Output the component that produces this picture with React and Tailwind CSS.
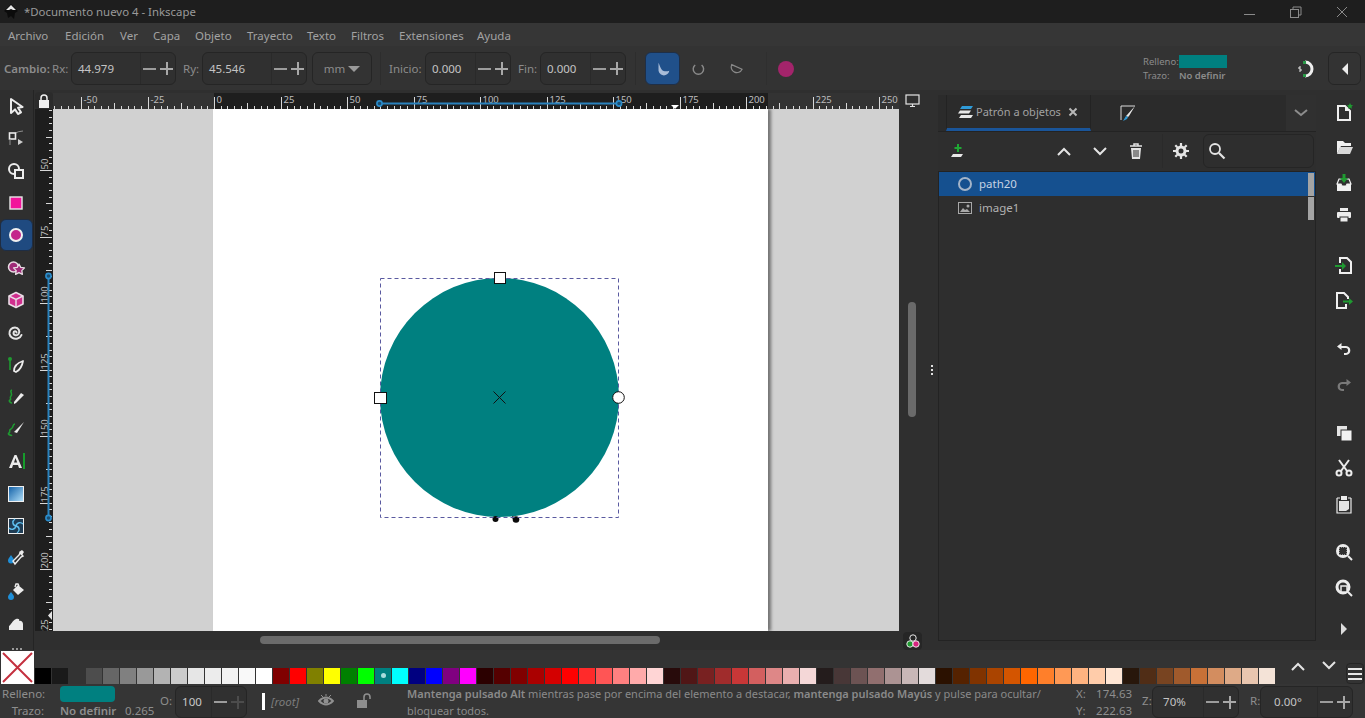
import React from "react";

const font = { fontFamily: '"Noto Sans", "Open Sans", sans-serif' };

const swatches = [
  "#000000", "#1a1a1a", "#333333", "#4d4d4d", "#666666", "#808080", "#999999", "#b3b3b3", "#cccccc", "#e6e6e6", "#ececec", "#f2f2f2", "#f9f9f9", "#ffffff",
  "#800000", "#ff0000", "#808000", "#ffff00", "#008000", "#00ff00", "#008080", "#00ffff", "#000080", "#0000ff", "#800080", "#ff00ff",
  "#2b0000", "#550000", "#800000", "#aa0000", "#d40000", "#ff0000", "#ff2a2a", "#ff5555", "#ff8080", "#ffaaaa", "#ffd5d5",
  "#280b0b", "#501616", "#782121", "#a02c2c", "#c83737", "#d35f5f", "#de8787", "#e9afaf", "#f4d7d7",
  "#241c1c", "#483737", "#6c5353", "#916f6f", "#ac9393", "#c8b7b7", "#e3dbdb",
  "#2b1100", "#552200", "#803300", "#aa4400", "#d45500", "#ff6600", "#ff7f2a", "#ff9955", "#ffb380", "#ffccaa", "#ffe6d5",
  "#28170b", "#502d16", "#784421", "#a05a2c", "#c87137", "#d38d5f", "#deaa87", "#e9c6af", "#f4e3d7",
];

const menus = [
  ["Archivo", "w-[57px]"],
  ["Edición", "w-[55px]"],
  ["Ver", "w-[33px]"],
  ["Capa", "w-[42px]"],
  ["Objeto", "w-[52px]"],
  ["Trayecto", "w-[60px]"],
  ["Texto", "w-[44px]"],
  ["Filtros", "w-[48px]"],
  ["Extensiones", "w-[78px]"],
  ["Ayuda", "w-[50px]"],
];

function Ico({ size = 20, children, className = "" }) {
  return (
    <svg width={size} height={size} viewBox="0 0 20 20" fill="none" className={className}>
      {children}
    </svg>
  );
}

function SpinBox({ value, width, text = "text-[#c4c4c4]", dim = false, pad = "pl-[6px]" }) {
  return (
    <div className={`flex items-center h-full rounded-md border border-[#252525] bg-[#303030] shrink-0 ${width}`}>
      <span className={`flex-1 text-[11.5px] ${pad} ${text}`}>{value}</span>
      <div className="flex items-center h-full border-l border-[#2a2a2a] w-[35px] shrink-0">
        <span className="w-[17px] flex justify-center">
          <span className="block w-[13px] h-[2px] bg-[#9c9c9c]" />
        </span>
        <span className="w-[17px] flex justify-center relative h-[13px] items-center">
          <span className={`block w-[13px] h-[2px] ${dim ? "bg-[#4c4c4c]" : "bg-[#a8a8a8]"}`} />
          <span className={`absolute left-[7.5px] top-0 block w-[2px] h-[13px] ${dim ? "bg-[#4c4c4c]" : "bg-[#a8a8a8]"}`} />
        </span>
      </div>
    </div>
  );
}

function HRuler() {
  const ticks = [];
  const labels = [];
  const zero = 161;
  for (let i = -24; i <= 104; i++) {
    const x = Math.round(zero + i * 6.65) + 0.5;
    const major = i % 10 === 0;
    const mid = i % 5 === 0;
    const h = major ? 12 : mid ? 6 : 3;
    ticks.push(<line key={i} x1={x} x2={x} y1={16 - h} y2={16} stroke="#d8d8d8" strokeWidth="1" />);
    if (major) {
      labels.push(
        <text key={i} x={x + 2} y={10} fontSize="9.5" fill="#bdbdbd" style={font}>
          {i * 2.5}
        </text>
      );
    }
  }
  return (
    <svg width="846" height="16" className="block">
      <rect width="846" height="16" fill="#333333" />
      <rect x="161" width="554" height="16" fill="#1e1e1e" />
      {ticks}
      {labels}
      <path d="M618 12h8l-4 4z" fill="#ffffff" />
      <line x1="326" x2="566" y1="10.5" y2="10.5" stroke="#2a82bd" strokeWidth="2" />
      <circle cx="326.5" cy="10.5" r="2.6" fill="#1b4d70" stroke="#2a8ccb" strokeWidth="1.6" />
      <circle cx="566" cy="10.5" r="2.6" fill="#1b4d70" stroke="#2a8ccb" strokeWidth="1.6" />
    </svg>
  );
}

function VRuler() {
  const ticks = [];
  const labels = [];
  const zero = 37 - 109;
  for (let i = 0; i <= 92; i++) {
    const y = Math.round(zero + i * 6.65) + 0.5;
    if (y < 0) continue;
    const major = i % 10 === 0;
    const mid = i % 5 === 0;
    const w = major ? 12 : mid ? 6 : 3;
    ticks.push(<line key={i} x1={17 - w} x2={17} y1={y} y2={y} stroke="#d8d8d8" strokeWidth="1" />);
    if (major && y > 20) {
      labels.push(
        <text key={i} x={0} y={0} transform={`translate(13 ${y - 1}) rotate(-90)`} fontSize="9.5" fill="#bdbdbd" style={font}>
          {i * 2.5}
        </text>
      );
    }
  }
  return (
    <svg width="18" height="522" className="block">
      <rect width="18" height="522" fill="#1e1e1e" />
      {ticks}
      {labels}
      <path d="M17 502v9l-4-4.5z" fill="#e4e4e4" />
      <line x1="13.5" x2="13.5" y1="167" y2="409" stroke="#2a82bd" strokeWidth="2" />
      <circle cx="13.5" cy="167" r="2.6" fill="#1b4d70" stroke="#2a8ccb" strokeWidth="1.6" />
      <circle cx="13.5" cy="409" r="2.6" fill="#1b4d70" stroke="#2a8ccb" strokeWidth="1.6" />
    </svg>
  );
}

const leftTools = [
  <Ico key="sel"><path d="M5 3v14l4-3.6L12 18l3-1.6-3-4.6 4.6-.8z" stroke="#ececec" strokeWidth="2" strokeLinejoin="round" fill="#2f2f2f" /></Ico>,
  <Ico key="node"><path d="M8 6q4-3 9-3" stroke="#8e8e8e" strokeWidth="1" /><rect x="3.500" y="5" width="6" height="6" fill="#2f2f2f" stroke="#ececec" strokeWidth="1.600" /><path d="M4 11v6" stroke="#8e8e8e" /><path d="M12 11l5 3-5 3z" fill="#cfcfcf" /></Ico>,
  <Ico key="tweak"><circle cx="8" cy="8" r="5" stroke="#ececec" strokeWidth="2" /><rect x="9" y="9" width="8" height="8" fill="#2f2f2f" stroke="#ececec" strokeWidth="2" /></Ico>,
  <Ico key="rect"><rect x="4" y="4" width="12" height="12" fill="#f2149b" stroke="#e8e8e8" strokeWidth="1.400" /></Ico>,
  <Ico key="ell"><circle cx="10" cy="10" r="6" fill="#c4268c" stroke="#f0f0f0" strokeWidth="2" /></Ico>,
  <Ico key="star">
    <circle cx="7.500" cy="9" r="5" fill="#a02a78" stroke="#e8dce4" strokeWidth="1.500" />
    <path d="M13 6l1.700 3.400 3.800.5-2.700 2.700.6 3.800-3.400-1.800-3.400 1.800.6-3.800-2.700-2.700 3.800-.5z" fill="#a02a78" stroke="#e8dce4" strokeWidth="1.300" strokeLinejoin="round" />
  </Ico>,
  <Ico key="box"><path d="M10 2.500l7 3.500v8l-7 3.500L3 14V6z" fill="#d02f8e" stroke="#eadde6" strokeWidth="1.600" strokeLinejoin="round" /><path d="M3 6l7 3.500L17 6M10 9.500v8" stroke="#eadde6" strokeWidth="1.400" /></Ico>,
  <Ico key="spiral"><path d="M10.500 10.500c0-1.800-3-1.500-3 .5 0 2.500 3.500 3 5 1 2-2.800 0-6.500-3.500-6.500C5.500 5.500 3 8.500 3.500 12c.6 3.500 4.500 5.500 8 4.500 2-.6 3.500-2 4-3.500" stroke="#e4e4e4" strokeWidth="2" strokeLinecap="round" /></Ico>,
  <Ico key="pen"><circle cx="4" cy="4" r="2" fill="#1f9a31" /><path d="M4 5v10" stroke="#1f9a31" strokeWidth="1.600" /><path d="M8 16c0-5 3-8 9-10-1 6-3 9-7 11z" fill="#2f2f2f" stroke="#ececec" strokeWidth="1.800" strokeLinejoin="round" /></Ico>,
  <Ico key="pencil"><path d="M6 3C3 4 7 7 5 9s1 3-1 4 1 3 2 3" stroke="#1f9a31" strokeWidth="1.600" /><path d="M8 15l7-9 3 2-8 8-2 1z" fill="#ececec" /></Ico>,
  <Ico key="cal"><path d="M9 5C6 5 8 9 5 10s0 3-2 4 2 3 3 2" stroke="#1f9a31" strokeWidth="1.600" /><path d="M8 13L18 3l-7 11z" fill="#ececec" /></Ico>,
  <Ico key="text"><path d="M3 17L8.500 4h2L16 17h-3l-1-3H7l-1 3zM8 11.500h3.200L9.500 7z" fill="#ececec" fillRule="evenodd" /><rect x="17" y="2" width="2" height="16" fill="#169c2b" /></Ico>,
  <Ico key="grad"><defs><linearGradient id="gr1" x1="0" y1="0" x2="1" y2="1"><stop offset="0" stopColor="#0f5ea6" /><stop offset="1" stopColor="#b4e2fa" /></linearGradient></defs><rect x="2.500" y="2.500" width="15" height="15" fill="url(#gr1)" stroke="#f0f0f0" strokeWidth="1" /></Ico>,
  <Ico key="mesh"><rect x="2.500" y="2.500" width="15" height="15" fill="#1f3d55" stroke="#f0f0f0" strokeWidth="1" /><path d="M10 10C6 9 6 5 9 3M10 10c1-4 5-4 7-2M10 10c4 1 4 5 1 7M10 10c-1 4-5 4-7 2" stroke="#5fc0f0" strokeWidth="1.400" /></Ico>,
  <Ico key="drop"><path d="M5 7c-2 3-3 4-3 5.500a3 3 0 006 0C8 11 7 10 5 7z" fill="#1f8fd8" /><path d="M9 16l6-7 2-1-3-3-1 2-6 6z" fill="#2f2f2f" stroke="#ececec" strokeWidth="1.400" /><path d="M13 4l3-2 2 2-2 3z" fill="#ececec" /></Ico>,
  <Ico key="fill"><path d="M5 11c-2 3-3 3.500-3 5a3 3 0 006 0c0-1.500-1-2-3-5z" fill="#1f8fd8" /><path d="M7 9l5-5 6 5-6 5z" fill="#ececec" /><path d="M9 6l1-3h2l1 2" stroke="#ececec" strokeWidth="1.400" /></Ico>,
  <Ico key="eraser"><path d="M3 17v-4c2-1 3-5 7-7 2-.800 4 0 3 2 2-1 4 1 4 3v6z" fill="#ececec" /></Ico>,
];

const rightTools = [
  [<Ico key="a"><path d="M4 3h7l5 5v9H4z" fill="#2f2f2f" stroke="#f0f0f0" strokeWidth="2" /><path d="M11 3v5h5" fill="#f0f0f0" /><path d="M16 0l1 2 2 .2-1.500 1.500.5 2-2-1-2 1 .5-2L13 2.200 15 2z" fill="#1f9a31" /></Ico>, "mb-[2px]"],
  [<Ico key="b"><path d="M3 4h6l2 2h6v3H7l-4 8z" fill="#f0f0f0" /><path d="M3 17l3-7h13l-3 7z" fill="#d8d8d8" /></Ico>, "mb-[4px]"],
  [<Ico key="c"><path d="M3 11h4l1 2h4l1-2h4v7H3z" fill="#f0f0f0" /><path d="M5 6h10l2 5h-4l-1 2H8l-1-2H3z" fill="#2f2f2f" stroke="#f0f0f0" strokeWidth="1.200" /><path d="M8.500 5V1h3v4H14l-4 5-4-5z" fill="#1f9a31" /></Ico>, "mb-0"],
  [<Ico key="d"><rect x="6" y="3" width="8" height="3" fill="#ececec" /><rect x="3" y="7" width="14" height="6" rx="1" fill="#ececec" /><rect x="6" y="12" width="8" height="5" fill="#ececec" stroke="#2f2f2f" /></Ico>, "mb-[18px]"],
  [<Ico key="e"><path d="M6 8V3h7l4 4v11H6v-4" stroke="#f0f0f0" strokeWidth="2" /><path d="M1 10h7V7l4 4-4 4v-3H1z" fill="#1f9a31" /></Ico>, "mb-[3px]"],
  [<Ico key="f"><path d="M12 14v4H3V3h7l4 4v2" stroke="#f0f0f0" strokeWidth="2" /><path d="M9 10.500h6V8l4 3.500-4 3.500v-2.500H9z" fill="#1f9a31" /></Ico>, "mb-[17px]"],
  [<Ico key="g"><path d="M7.500 4L3 7.500 7.500 11V9H12c2.800 0 2.800 5 0 5h-2v2h2c5.800 0 5.800-9 0-9H7.500z" fill="#ececec" /></Ico>, "mb-[4px]"],
  [<Ico key="h"><path d="M12.500 4L17 7.500 12.500 11V9H8c-2.800 0-2.800 5 0 5h2v2H8C2.200 16 2.200 7 8 7h4.500z" fill="#7a7a7a" /></Ico>, "mb-[16px]"],
  [<Ico key="i"><rect x="3" y="3" width="10" height="10" fill="#e4e4e4" /><rect x="7" y="7" width="11" height="11" fill="#f2f2f2" stroke="#2f2f2f" /></Ico>, "mb-[3px]"],
  [<Ico key="j"><path d="M5 2l8 11M15 2L7 13" stroke="#ececec" strokeWidth="2" /><circle cx="5" cy="15" r="2.500" stroke="#ececec" strokeWidth="2" /><circle cx="15" cy="15" r="2.500" stroke="#ececec" strokeWidth="2" /></Ico>, "mb-[4px]"],
  [<Ico key="k"><path d="M3 4h3M14 4h3M3 4v15h14V4" stroke="#ececec" strokeWidth="1.200" /><rect x="7" y="2" width="6" height="4" fill="#ececec" /><path d="M5 7h10v8l-3 2H5z" fill="#e4e4e4" /></Ico>, "mb-[16px]"],
  [<Ico key="l"><circle cx="9" cy="9" r="7" fill="#ececec" /><rect x="5" y="5" width="8" height="8" fill="#2f2f2f" /><rect x="5" y="5" width="8" height="8" fill="none" stroke="#ececec" strokeDasharray="1 1" /><path d="M14 14l4 4" stroke="#ececec" strokeWidth="2" /></Ico>, "mb-[4px]"],
  [<Ico key="m"><circle cx="9" cy="9" r="6" stroke="#ececec" strokeWidth="3" /><rect x="7" y="8" width="6" height="6" fill="#2f2f2f" stroke="#ececec" strokeWidth="1.500" /><path d="M14 14l4 4" stroke="#ececec" strokeWidth="2" /></Ico>, "mb-[19px]"],
];

export default function App() {
  return (
    <div className="w-[1365px] h-[718px] overflow-hidden flex flex-col bg-[#2f2f2f] text-[#b0b0b0] select-none" style={font}>
      {/* title bar */}
      <div className="h-[23px] shrink-0 flex items-center bg-[#1e1e1e]">
        <svg width="18" height="18" viewBox="0 0 18 18" className="ml-[2px]">
          <path d="M9 1l7 7-3 2-1 6-3-3-3 2-1-5-3-2z" fill="#0b0b0b" />
          <path d="M9 2L4 7h3l2-1 2 1h3z" fill="#e8e8e8" />
        </svg>
        <span className="ml-[4px] text-[11.4px] text-[#9a9a9a]">*Documento nuevo 4 - Inkscape</span>
        <div className="ml-auto flex items-center">
          <svg width="46" height="16" viewBox="0 0 46 16"><line x1="17" x2="28" y1="10.500" y2="10.500" stroke="#8a8a8a" /></svg>
          <svg width="46" height="16" viewBox="0 0 46 16"><rect x="17.500" y="5.500" width="8" height="8" fill="none" stroke="#8a8a8a" /><path d="M20 5V3h8v8h-2" fill="none" stroke="#8a8a8a" /></svg>
          <svg width="46" height="16" viewBox="0 0 46 16"><path d="M18 3l10 10M28 3L18 13" stroke="#8a8a8a" /></svg>
        </div>
      </div>

      {/* menu */}
      <div className="h-[24px] shrink-0 flex items-center pl-[8px] pt-[2px] bg-[#363636] border-b border-[#333333] text-[11.5px] text-[#a2a2a2]">
        {menus.map(([m, w]) => (
          <span key={m} className={w}>{m}</span>
        ))}
      </div>

      {/* tool controls */}
      <div className="h-[43px] shrink-0 flex items-center bg-[#333333] text-[11.5px] text-[#8c8c8c] py-[5px]">
        <span className="ml-[4px] w-[48px] font-semibold whitespace-nowrap">Cambio:</span>
        <span className="w-[19px]">Rx:</span>
        <SpinBox value="44.979" width="w-[105px]" />
        <span className="ml-[7px] w-[19px]">Ry:</span>
        <SpinBox value="45.546" width="w-[105px]" />
        <div className="ml-[5px] w-[60px] h-full rounded-md border border-[#252525] flex items-center justify-center gap-[3px]">
          <span>mm</span>
          <span className="w-0 h-0 border-x-[6px] border-x-transparent border-t-[6px] border-t-[#9a9a9a]" />
        </div>
        <div className="ml-[8px] w-px h-full bg-[#2d2d2d]" />
        <span className="ml-[8px] w-[36px]">Inicio:</span>
        <SpinBox value="0.000" width="w-[86px]" />
        <span className="ml-[7px] w-[22px]">Fin:</span>
        <SpinBox value="0.000" width="w-[86px]" />
        <div className="ml-[9px] w-px h-full bg-[#2d2d2d]" />
        <div className="ml-[9px] w-[35px] h-full rounded-md bg-[#20508a] border border-[#1f2f47] flex items-center justify-center">
          <Ico size="18"><path d="M5 3v7a6 6 0 0012 2c-3 1-6.500 1-8.500-1.500C7 8.500 6.500 6 5 3z" fill="#a8bcd8" /></Ico>
        </div>
        <span className="ml-[12px] w-[16px] flex justify-center">
          <Ico size="16"><path d="M4 5a6.500 6.500 0 108 0" stroke="#8a8a8a" strokeWidth="1.800" /></Ico>
        </span>
        <span className="ml-[21px] w-[16px] flex justify-center">
          <Ico size="16"><path d="M5 3l11 9a6.500 6.500 0 11-11-9z" transform="rotate(-15 10 10)" stroke="#8a8a8a" strokeWidth="1.500" /></Ico>
        </span>
        <div className="ml-[21px] w-px h-full bg-[#2f2f2f]" />
        <span className="ml-[11px] w-[16px] h-[16px] rounded-full bg-[#a3246b]" />
        <div className="ml-auto w-[85px] flex flex-col text-[9.5px] leading-[14px] text-[#8c8c8c]">
          <div className="flex items-center">
            <span className="w-[36px] whitespace-nowrap">Relleno:</span>
            <span className="w-[48px] h-[13px] bg-[#008080]" />
          </div>
          <div className="flex items-center">
            <span className="w-[36px]">Trazo:</span>
            <span className="font-semibold">No definir</span>
          </div>
        </div>
        <span className="ml-[67px] w-[20px]">
          <Ico size="20"><path d="M10 3a7 7 0 010 14" stroke="#efefef" strokeWidth="3" /><rect x="8" y="2" width="3" height="3" fill="#2a9a48" /><rect x="8" y="15" width="3" height="3" fill="#2a9a48" /><path d="M6 8H4v2h2v2H4" stroke="#e8e8e8" strokeWidth="1" /></Ico>
        </span>
        <div className="ml-[13px] mr-[4px] w-[33px] h-full rounded-md border border-[#252525] flex items-center justify-center">
          <span className="w-0 h-0 border-y-[6px] border-y-transparent border-r-[6px] border-r-[#ececec]" />
        </div>
      </div>

      {/* main area */}
      <div className="h-[560px] shrink-0 flex bg-[#2f2f2f]">
        {/* left toolbox */}
        <div className="w-[34px] shrink-0 border-r border-[#242424] overflow-hidden">
          {leftTools.map((t, i) => (
            <div
              key={i}
              className={`h-[32.3px] flex items-center justify-center pr-px ${i === 4 ? "bg-[#1f4a80] rounded-md border border-[#1e2d44]" : ""}`}
            >
              {t}
            </div>
          ))}
          <div className="flex justify-center gap-[2px] pt-[9px]">
            <span className="w-[2px] h-[2px] bg-[#9a9a9a]" />
            <span className="w-[2px] h-[2px] bg-[#9a9a9a]" />
            <span className="w-[2px] h-[2px] bg-[#9a9a9a]" />
          </div>
        </div>

        {/* rulers + canvas */}
        <div className="w-[891px] shrink-0 flex flex-col pl-[1px]">
          <div className="h-[19px] shrink-0 flex items-end">
            <div className="w-[18px] h-[17px] bg-[#2b2b2b] rounded-sm flex items-center justify-center">
              <svg width="14" height="14" viewBox="0 0 14 14">
                <path d="M4 6V4a3 3 0 016 0v2" fill="none" stroke="#efefef" strokeWidth="1.500" />
                <rect x="2" y="6" width="10" height="8" fill="#efefef" />
              </svg>
            </div>
            <HRuler />
            <div className="ml-[6px] w-[15px] h-[16px] flex items-center justify-center">
              <svg width="15" height="14" viewBox="0 0 15 14">
                <rect x="1" y="1" width="13" height="9" fill="none" stroke="#e4e4e4" strokeWidth="1.200" />
                <path d="M5 12.500h5M7.500 10v2" stroke="#e4e4e4" strokeWidth="1.200" />
              </svg>
            </div>
          </div>
          <div className="h-[522px] shrink-0 flex">
            <VRuler />
            <div className="relative w-[846px] h-full overflow-hidden bg-[#d1d1d1]">
              {/* page */}
              <div className="absolute left-[160px] top-0 w-[555px] h-full bg-white shadow-[3px_0_3px_rgba(0,0,0,0.45)]" />
              <svg className="absolute left-0 top-0" width="846" height="522">
                <circle cx="446.500" cy="288.500" r="119.500" fill="#008080" />
                <circle cx="442.500" cy="410" r="3" fill="#0a0a0a" />
                <circle cx="463" cy="410.500" r="3.300" fill="#0a0a0a" />
                <path d="M459 408l4 2" stroke="#0a0a0a" strokeWidth="2" />
                <rect x="327.500" y="169.500" width="238" height="239" fill="none" stroke="#5a5aa0" strokeDasharray="4 3" />
                <path d="M440.500 282.500l12 12M452.500 282.500l-12 12" stroke="#111111" />
                <rect x="441.500" y="163.500" width="11" height="11" fill="#ffffff" stroke="#111111" />
                <rect x="321.500" y="283.500" width="12" height="11" fill="#ffffff" stroke="#111111" />
                <circle cx="565.500" cy="288.500" r="5.800" fill="#ffffff" stroke="#111111" />
              </svg>
            </div>
            <div className="w-[26px] flex justify-center">
              <div className="w-[8px] h-[115px] mt-[193px] rounded-full bg-[#6a6a6a]" />
            </div>
          </div>
          <div className="flex-1 flex pl-[18px]">
            <div className="w-[846px] pl-[207px] pt-[5px]">
              <div className="w-[400px] h-[8px] rounded-full bg-[#6a6a6a]" />
            </div>
            <div className="ml-[4px] w-[19px] h-[18px] mt-px rounded bg-[#262626] flex items-center justify-center">
              <svg width="16" height="16" viewBox="0 0 16 16">
                <circle cx="8" cy="5" r="3.200" fill="none" stroke="#e8e8e8" />
                <circle cx="5" cy="11" r="3.200" fill="#1f9a31" stroke="#e8e8e8" />
                <circle cx="11" cy="11" r="3.200" fill="#d6247f" stroke="#e8e8e8" />
              </svg>
            </div>
          </div>
        </div>

        {/* handle */}
        <div className="w-[13px] shrink-0 flex flex-col items-center justify-center gap-[2px]">
          <span className="w-[2px] h-[2px] bg-[#e0e0e0]" />
          <span className="w-[2px] h-[2px] bg-[#e0e0e0]" />
          <span className="w-[2px] h-[2px] bg-[#e0e0e0]" />
        </div>

        {/* dock panel */}
        <div className="w-[378px] shrink-0 pt-[5px] pb-[9px] flex flex-col">
          <div className="h-[37px] shrink-0 flex bg-[#2b2b2b] border-b border-[#232323]">
            <div className="ml-[8px] w-[145px] border-x border-[#232323] border-b-[3px] border-b-[#1a5599] flex items-center pl-[11px] gap-[2px]">
              <svg width="16" height="14" viewBox="0 0 16 14">
                <path d="M4 1h11l-2 3H2z" fill="#2f9bd8" />
                <path d="M2 5.500h11l-2 3H0z" fill="#e8e8e8" />
                <path d="M3 10h12l-2 3H1z" fill="#e8e8e8" />
              </svg>
              <span className="text-[11px] text-[#a2a2a2] pt-[2px]">Patrón a objetos</span>
              <svg width="10" height="10" viewBox="0 0 10 10" className="ml-[5px]"><path d="M1.500 1.500l7 7M8.500 1.500l-7 7" stroke="#b8b8b8" strokeWidth="2" /></svg>
            </div>
            <div className="ml-[29px] flex items-center">
              <svg width="17" height="17" viewBox="0 0 17 17">
                <path d="M15 1H1v14" fill="none" stroke="#dcdcdc" strokeWidth="1" />
                <path d="M15 1L7 10l-1 1 2 1 1-1z" fill="#e8e8e8" />
                <path d="M6 11l-3 5 4-2 1-2z" fill="#2f9bd8" />
              </svg>
            </div>
            <div className="ml-auto w-[30px] bg-[#303030] flex items-center justify-center">
              <svg width="14" height="8" viewBox="0 0 14 8"><path d="M1 1l6 5 6-5" fill="none" stroke="#8c8c8c" strokeWidth="2" /></svg>
            </div>
          </div>
          <div className="h-[38px] shrink-0 flex items-center bg-[#2e2e2e] py-[2px]">
            <span className="ml-[12px] w-[20px]">
              <svg width="16" height="16" viewBox="0 0 16 16">
                <path d="M8 1v8M4.500 5h7" stroke="#1fa834" strokeWidth="2" />
                <path d="M3 11h10l-2 3H1z" fill="#e8e8e8" />
              </svg>
            </span>
            <span className="ml-[84px] w-[20px] flex justify-center"><svg width="14" height="9" viewBox="0 0 14 9"><path d="M1 8l6-6 6 6" fill="none" stroke="#e4e4e4" strokeWidth="2" /></svg></span>
            <span className="ml-[16px] w-[20px] flex justify-center"><svg width="14" height="9" viewBox="0 0 14 9"><path d="M1 1l6 6 6-6" fill="none" stroke="#e4e4e4" strokeWidth="2" /></svg></span>
            <span className="ml-[16px] w-[20px] flex justify-center">
              <svg width="14" height="16" viewBox="0 0 14 16">
                <path d="M1 3h12M5 3V1h4v2" stroke="#e4e4e4" strokeWidth="1.500" fill="none" />
                <path d="M2 5h10l-1 11H3z" fill="#e4e4e4" />
                <path d="M5 7v7M7 7v7M9 7v7" stroke="#2e2e2e" />
              </svg>
            </span>
            <div className="ml-[16px] w-px h-full bg-[#2a2a2a]" />
            <span className="ml-[10px] w-[16px] flex justify-center">
              <svg width="16" height="16" viewBox="0 0 16 16">
                <circle cx="8" cy="8" r="4" fill="none" stroke="#e4e4e4" strokeWidth="3" />
                <path d="M8 0v3M8 13v3M0 8h3M13 8h3M2.300 2.300l2 2M11.700 11.700l2 2M13.700 2.300l-2 2M4.300 11.700l-2 2" stroke="#e4e4e4" strokeWidth="2.200" />
              </svg>
            </span>
            <div className="ml-[14px] w-[111px] h-full rounded-md border border-[#252525] flex items-center pl-[4px]">
              <svg width="18" height="18" viewBox="0 0 18 18">
                <circle cx="7" cy="7" r="5" fill="none" stroke="#e4e4e4" strokeWidth="1.800" />
                <path d="M11 11l5.500 5.500" stroke="#e4e4e4" strokeWidth="2.200" />
              </svg>
            </div>
          </div>
          <div className="flex-1 mt-[1px] border border-[#232323] bg-[#2e2e2e] relative">
            <div className="h-[24px] bg-[#15508f] flex items-center text-[11.5px] text-[#c6d3e4]">
              <span className="ml-[19px] mr-[7px] w-[14px] h-[14px] rounded-full border-2 border-[#a4b4c8]" />
              path20
            </div>
            <div className="h-[24px] flex items-center text-[11.5px] text-[#b2b2b2]">
              <svg width="14" height="12" viewBox="0 0 14 12" className="ml-[19px] mr-[7px]">
                <rect x="0.500" y="0.500" width="13" height="11" fill="none" stroke="#a8a8a8" />
                <path d="M2 10l3-4 2 2 2-1 3 3z" fill="#a8a8a8" />
                <circle cx="10" cy="4" r="1.500" fill="#a8a8a8" />
              </svg>
              image1
            </div>
            <div className="absolute right-[1px] top-[1px] w-[6px] flex flex-col gap-[1px]">
              <span className="h-[23px] bg-[#a4a4a4]" />
              <span className="h-[23px] bg-[#a4a4a4]" />
            </div>
          </div>
        </div>

        {/* right commands */}
        <div className="flex-1 flex flex-col items-center pt-[7px] pl-[7px] overflow-hidden">
          {rightTools.map(([icon, cls], i) => (
            <div key={i} className={`w-full h-[32px] flex items-center justify-center shrink-0 ${cls}`}>
              {icon}
            </div>
          ))}
          <div className="w-0 h-0 border-y-[6px] border-y-transparent border-l-[6px] border-l-[#dcdcdc]" />
        </div>
      </div>

      {/* palette */}
      <div className="h-[34px] shrink-0 flex items-end bg-[#333333]">
        <div className="ml-[1px] w-[33px] h-[33px] bg-white">
          <svg width="33" height="33" viewBox="0 0 33 33"><path d="M2 2l29 29M31 2L2 31" stroke="#c4303f" strokeWidth="2" /></svg>
        </div>
        <div className="ml-[1px] flex h-[17px]">
          {swatches.map((c, i) => (
            <div key={i} className="w-[17px] h-[17px] pr-px flex items-center justify-center">
              <div className="w-[16px] h-[16px] flex items-center justify-center" style={{ backgroundColor: c }}>
                {i === 20 && <span className="w-[5px] h-[5px] rounded-full bg-[#a8dcdc]" />}
              </div>
            </div>
          ))}
        </div>
        <div className="ml-[15px] flex items-center h-full">
          <svg width="14" height="9" viewBox="0 0 14 9" className="mb-[2px]"><path d="M1 8l6-6 6 6" fill="none" stroke="#e4e4e4" strokeWidth="2" /></svg>
          <svg width="14" height="9" viewBox="0 0 14 9" className="ml-[17px] mb-[4px]"><path d="M1 1l6 6 6-6" fill="none" stroke="#e4e4e4" strokeWidth="2" /></svg>
          <div className="ml-[10px] w-[18px] h-[21px] rounded border border-[#252525] flex flex-col justify-center gap-[3px] px-[1px] mt-[13px]">
            <span className="h-[2px] bg-[#e8e8e8]" />
            <span className="h-[2px] bg-[#e8e8e8]" />
            <span className="h-[2px] bg-[#e8e8e8]" />
          </div>
        </div>
      </div>

      {/* status bar */}
      <div className="h-[34px] shrink-0 overflow-hidden flex bg-[#353535] text-[11.5px] text-[#8e8e8e]">
        <div className="w-[158px] shrink-0 leading-[17px] pt-[1px]">
          <div className="flex items-center">
            <span className="w-[44px] pl-[2px]">Relleno:</span>
            <span className="ml-[16px] w-[55px] h-[16px] bg-[#008080] rounded-sm" />
          </div>
          <div className="flex items-center">
            <span className="w-[44px] text-right">Trazo:</span>
            <span className="ml-[16px] w-[56px] font-semibold whitespace-nowrap">No definir</span>
            <span className="ml-[9px]">0.265</span>
          </div>
        </div>
        <span className="ml-[2px] self-center">O:</span>
        <div className="ml-[3px] w-[72px] h-[32px] mt-[2px] shrink-0">
          <SpinBox value="100" width="w-[72px]" text="text-[#c8c8c8]" dim />
        </div>
        <span className="ml-[15px] mt-[9px] w-[3px] h-[17px] bg-white shrink-0" />
        <span className="ml-[6px] mt-[9px] italic text-[#7c7c7c]">[root]</span>
        <span className="ml-[19px] mt-[10px]">
          <svg width="16" height="14" viewBox="0 0 16 14">
            <path d="M1 7q7-7 14 0-7 7-14 0z" fill="none" stroke="#909090" strokeWidth="1.800" />
            <circle cx="8" cy="7" r="2.500" fill="#909090" />
            <path d="M3 1l2 2M8 0v2M13 1l-2 2" stroke="#909090" />
          </svg>
        </span>
        <span className="ml-[22px] mt-[9px]">
          <svg width="16" height="16" viewBox="0 0 16 16">
            <rect x="1" y="7" width="10" height="8" fill="#8e8e8e" />
            <path d="M8 7V4a3 3 0 016 0v2" fill="none" stroke="#8e8e8e" strokeWidth="1.600" />
          </svg>
        </span>
        <div className="ml-[35px] w-[654px] shrink-0 leading-[17px] pt-[1px] text-[11px] text-[#8a8a8a]">
          <div className="whitespace-nowrap"><b className="font-semibold">Mantenga pulsado Alt</b> mientras pase por encima del elemento a destacar, <b className="font-semibold">mantenga pulsado Mayús</b> y pulse para ocultar/</div>
          <div>bloquear todos.</div>
        </div>
        <div className="ml-[15px] w-[56px] shrink-0 leading-[17px] pt-[1px]">
          <div className="flex justify-between"><span>X:</span><span>174.63</span></div>
          <div className="flex justify-between"><span>Y:</span><span>222.63</span></div>
        </div>
        <span className="ml-[10px] self-center w-[10px]">Z:</span>
        <div className="w-[87px] h-[32px] mt-[2px] shrink-0">
          <SpinBox value="70%" width="w-[87px]" pad="pl-[10px]" />
        </div>
        <span className="ml-[11px] self-center w-[10px]">R:</span>
        <div className="w-[93px] h-[32px] mt-[2px] shrink-0">
          <SpinBox value="0.00°" width="w-[93px]" pad="pl-[13px]" />
        </div>
      </div>
    </div>
  );
}
